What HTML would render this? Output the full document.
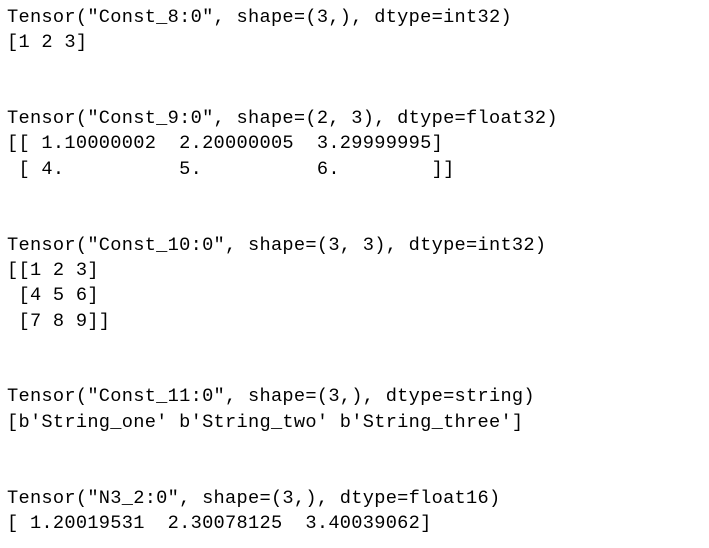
<!DOCTYPE html>
<html><head><meta charset="utf-8"><style>
html,body{margin:0;padding:0;background:#fff;width:709px;height:548px;overflow:hidden}
pre{margin:0;position:absolute;left:7px;top:5px;font-family:"Liberation Mono",monospace;font-size:18.67px;letter-spacing:0.28px;line-height:25.3px;color:#000}
</style></head><body><pre>Tensor("Const_8:0", shape=(3,), dtype=int32)
[1 2 3]


Tensor("Const_9:0", shape=(2, 3), dtype=float32)
[[ 1.10000002  2.20000005  3.29999995]
 [ 4.          5.          6.        ]]


Tensor("Const_10:0", shape=(3, 3), dtype=int32)
[[1 2 3]
 [4 5 6]
 [7 8 9]]


Tensor("Const_11:0", shape=(3,), dtype=string)
[b'String_one' b'String_two' b'String_three']


Tensor("N3_2:0", shape=(3,), dtype=float16)
[ 1.20019531  2.30078125  3.40039062]</pre></body></html>
